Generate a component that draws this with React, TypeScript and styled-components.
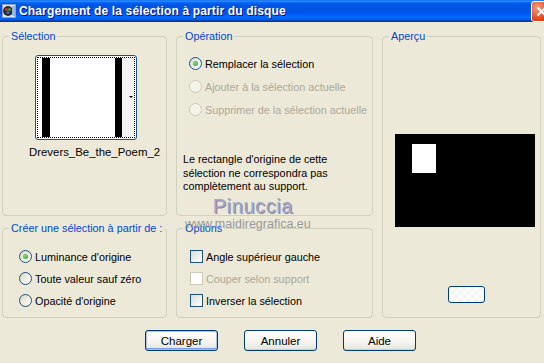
import React from 'react';
import styled, { createGlobalStyle } from 'styled-components';

const GlobalStyle = createGlobalStyle`
  html, body {
    margin: 0;
    padding: 0;
    background: #ece9d8;
  }
`;

const Window = styled.div`
  position: relative;
  width: 544px;
  height: 363px;
  overflow: hidden;
  background: #ece9d8;
  font-family: 'Liberation Sans', Arial, sans-serif;
  font-size: 10.8px;
  color: #000;
`;

const TitleBar = styled.div`
  display: flex;
  align-items: center;
  height: 22px;
  padding-left: 2px;
  background: linear-gradient(
    #0058ee 0%,
    #3593ff 4%,
    #288eff 6%,
    #127dff 8%,
    #036ffc 10%,
    #0262ee 14%,
    #0057e5 20%,
    #0054e3 24%,
    #0055eb 56%,
    #005bf5 66%,
    #026afe 76%,
    #0062ef 86%,
    #0052d6 92%,
    #0040ab 94%,
    #003092 100%
  );
`;

const Title = styled.span`
  margin-left: 3px;
  color: #fff;
  font-weight: bold;
  font-size: 12px;
  letter-spacing: 0.15px;
  text-shadow: 1px 1px 0 #0f1089;
`;

const CloseButton = styled.div`
  margin-left: auto;
  margin-right: -8px;
  width: 21px;
  height: 21px;
  box-sizing: border-box;
  border: 1px solid #fff;
  border-radius: 3px;
  background: radial-gradient(circle at 30% 30%, #f19d84, #e2491d 60%, #c2350d);
  display: flex;
  align-items: center;
  justify-content: center;
`;

const Panels = styled.div`
  display: grid;
  grid-template-columns: 165px 197px 159px;
  grid-template-rows: 186px 96px;
  column-gap: 9px;
  row-gap: 6px;
  padding: 8px 0 0 2px;
`;

const Group = styled.fieldset<{ $col: number; $rows?: string }>`
  margin: 0;
  padding: 0;
  min-width: 0;
  border: 1px solid #d0d0bf;
  border-radius: 4px;
  grid-column: ${(p) => p.$col};
  grid-row: ${(p) => p.$rows ?? 'auto'};
`;

const Legend = styled.legend`
  margin-left: 6px;
  padding: 0 2px;
  color: #0046d5;
  font-size: 10.8px;
  line-height: 13px;
  white-space: nowrap;
`;

const GroupBody = styled.div<{ $padLeft: number }>`
  display: flex;
  flex-direction: column;
  align-items: flex-start;
  padding-left: ${(p) => p.$padLeft}px;
`;

const OptionList = styled.div<{ $top: number; $gap: number }>`
  display: flex;
  flex-direction: column;
  gap: ${(p) => p.$gap}px;
  margin-top: ${(p) => p.$top}px;
`;

const Row = styled.div<{ $disabled?: boolean }>`
  display: flex;
  align-items: center;
  gap: 3px;
  height: 13px;
  white-space: nowrap;
  color: ${(p) => (p.$disabled ? '#aca899' : '#000')};
`;

const RadioCircle = styled.span<{ $checked?: boolean; $disabled?: boolean }>`
  position: relative;
  width: 13px;
  height: 13px;
  box-sizing: border-box;
  border-radius: 50%;
  border: 1px solid ${(p) => (p.$disabled ? '#cac8bb' : '#1c5180')};
  background: ${(p) =>
    p.$disabled ? '#f5f4ea' : 'linear-gradient(135deg, #dcd9c8, #ffffff)'};
  flex-shrink: 0;
  &::after {
    content: '';
    display: ${(p) => (p.$checked ? 'block' : 'none')};
    position: absolute;
    left: 3px;
    top: 3px;
    width: 5px;
    height: 5px;
    border-radius: 50%;
    background: radial-gradient(circle at 40% 40%, #7fe07f, #21a121);
  }
`;

const CheckBox = styled.span<{ $disabled?: boolean }>`
  width: 13px;
  height: 13px;
  box-sizing: border-box;
  border: 1px solid ${(p) => (p.$disabled ? '#cac8bb' : '#1c5180')};
  background: ${(p) =>
    p.$disabled ? '#ffffff' : 'linear-gradient(135deg, #dcdcd7, #ffffff)'};
  flex-shrink: 0;
`;

const Thumb = styled.div`
  margin: 12px 0 0 32px;
  width: 102px;
  height: 85px;
  box-sizing: border-box;
  border: 1px solid #1c5180;
  border-radius: 3px;
  background: #fff;
  padding: 1px;
`;

const ThumbInner = styled.div`
  height: 100%;
  box-sizing: border-box;
  border: 1px dotted #000;
`;

const ThumbName = styled.div`
  margin: 6px 0 0 26px;
  font-size: 11.4px;
`;

const Note = styled.p`
  margin: 37px 0 0 -6px;
  line-height: 13.5px;
  width: 180px;
`;

const PreviewCanvas = styled.div`
  margin-top: 91px;
  width: 140px;
  height: 93px;
  background: #000;
  display: flex;
`;

const SmallButton = styled.div`
  margin: 59px 0 0 53px;
  width: 37px;
  height: 17px;
  box-sizing: border-box;
  border: 1px solid #003c74;
  border-radius: 3px;
  background:
    repeating-conic-gradient(#f4f4f0 0% 25%, #ffffff 0% 50%) 50% 50% / 8px 8px;
`;

const ButtonBar = styled.div`
  display: flex;
  gap: 26px;
  margin-top: 12px;
  padding-left: 145px;
`;

const Button = styled.button<{ $default?: boolean }>`
  width: 73px;
  height: 21px;
  padding: 0;
  font-family: 'Liberation Sans', Arial, sans-serif;
  font-size: 11.5px;
  color: #000;
  border: 1px solid #003c74;
  border-radius: 3px;
  background: linear-gradient(#ffffff 0%, #f5f4ef 60%, #e3e2da 100%);
  box-shadow: ${(p) =>
    p.$default ? 'inset 0 0 0 1px #a9c0ea, inset 0 -1px 0 1px #7c9ee0' : 'inset 0 -1px 0 #d6d0c5'};
`;

const Watermark = styled.div`
  position: absolute;
  left: 185px;
  top: 196px;
  display: flex;
  flex-direction: column;
  align-items: center;
  pointer-events: none;
`;

const WatermarkName = styled.span`
  margin-left: 10px;
  font-size: 20px;
  letter-spacing: 0.6px;
  line-height: 20px;
  color: #a3a6c9;
  text-shadow: 1px 1px 0 #8a8a9a;
`;

const WatermarkSite = styled.span`
  margin-top: 2px;
  font-size: 12.5px;
  line-height: 13px;
  color: #999;
`;

const TitleIcon = () => (
  <svg width="14" height="14" viewBox="0 0 14 14">
    <rect x="0.5" y="0.5" width="13" height="13" fill="#dfe6f0" stroke="#8ca0c0" />
    <circle cx="6" cy="7" r="5" fill="#2b2b2b" />
    <circle cx="4.5" cy="5.5" r="1.5" fill="#d63030" />
    <circle cx="7.5" cy="5.5" r="1.5" fill="#2fae3a" />
    <circle cx="6" cy="8.5" r="1.5" fill="#3a62d8" />
    <rect x="10" y="2" width="3" height="10" fill="#9fb8e0" />
  </svg>
);

const CloseIcon = () => (
  <svg width="11" height="11" viewBox="0 0 11 11">
    <path d="M1.5 1.5 L9.5 9.5 M9.5 1.5 L1.5 9.5" stroke="#fff" strokeWidth="2" />
  </svg>
);

const SelectionImage = () => (
  <svg width="96" height="79" viewBox="0 0 96 79" style={{ display: 'block' }}>
    <rect x="0" y="0" width="96" height="79" fill="#fff" />
    <rect x="4" y="0" width="8" height="79" fill="#000" />
    <rect x="77" y="0" width="7" height="79" fill="#000" />
    <rect x="84" y="0" width="12" height="79" fill="#f3f3f3" />
    <path d="M91 38 L95 38 L93 40 Z" fill="#000" />
  </svg>
);

const PreviewImage = () => (
  <svg width="140" height="93" viewBox="0 0 140 93">
    <rect x="0" y="0" width="140" height="93" fill="#000" />
    <rect x="17" y="10" width="24" height="29" fill="#fff" />
  </svg>
);

const App: React.FC = () => {
  return (
    <Window>
      <GlobalStyle />
      <TitleBar>
        <TitleIcon />
        <Title>Chargement de la sélection à partir du disque</Title>
        <CloseButton>
          <CloseIcon />
        </CloseButton>
      </TitleBar>

      <Panels>
        <Group $col={1} $rows="1">
          <Legend>Sélection</Legend>
          <GroupBody $padLeft={0}>
            <Thumb>
              <ThumbInner>
                <SelectionImage />
              </ThumbInner>
            </Thumb>
            <ThumbName>Drevers_Be_the_Poem_2</ThumbName>
          </GroupBody>
        </Group>

        <Group $col={2} $rows="1">
          <Legend>Opération</Legend>
          <GroupBody $padLeft={12}>
            <OptionList $top={14} $gap={10}>
              <Row>
                <RadioCircle $checked />
                Remplacer la sélection
              </Row>
              <Row $disabled>
                <RadioCircle $disabled />
                Ajouter à la sélection actuelle
              </Row>
              <Row $disabled>
                <RadioCircle $disabled />
                Supprimer de la sélection actuelle
              </Row>
            </OptionList>
            <Note>
              Le rectangle d'origine de cette
              <br />
              sélection ne correspondra pas
              <br />
              complètement au support.
            </Note>
          </GroupBody>
        </Group>

        <Group $col={3} $rows="1 / span 2">
          <Legend>Aperçu</Legend>
          <GroupBody $padLeft={12}>
            <PreviewCanvas>
              <PreviewImage />
            </PreviewCanvas>
            <SmallButton />
          </GroupBody>
        </Group>

        <Group $col={1} $rows="2">
          <Legend>Créer une sélection à partir de :</Legend>
          <GroupBody $padLeft={16}>
            <OptionList $top={15} $gap={9}>
              <Row>
                <RadioCircle $checked />
                Luminance d'origine
              </Row>
              <Row>
                <RadioCircle />
                Toute valeur sauf zéro
              </Row>
              <Row>
                <RadioCircle />
                Opacité d'origine
              </Row>
            </OptionList>
          </GroupBody>
        </Group>

        <Group $col={2} $rows="2">
          <Legend>Options</Legend>
          <GroupBody $padLeft={13}>
            <OptionList $top={15} $gap={9}>
              <Row>
                <CheckBox />
                Angle supérieur gauche
              </Row>
              <Row $disabled>
                <CheckBox $disabled />
                Couper selon support
              </Row>
              <Row>
                <CheckBox />
                Inverser la sélection
              </Row>
            </OptionList>
          </GroupBody>
        </Group>
      </Panels>

      <ButtonBar>
        <Button $default>Charger</Button>
        <Button>Annuler</Button>
        <Button>Aide</Button>
      </ButtonBar>

      <Watermark>
        <WatermarkName>Pinuccia</WatermarkName>
        <WatermarkSite>www.maidiregrafica.eu</WatermarkSite>
      </Watermark>
    </Window>
  );
};

export default App;
